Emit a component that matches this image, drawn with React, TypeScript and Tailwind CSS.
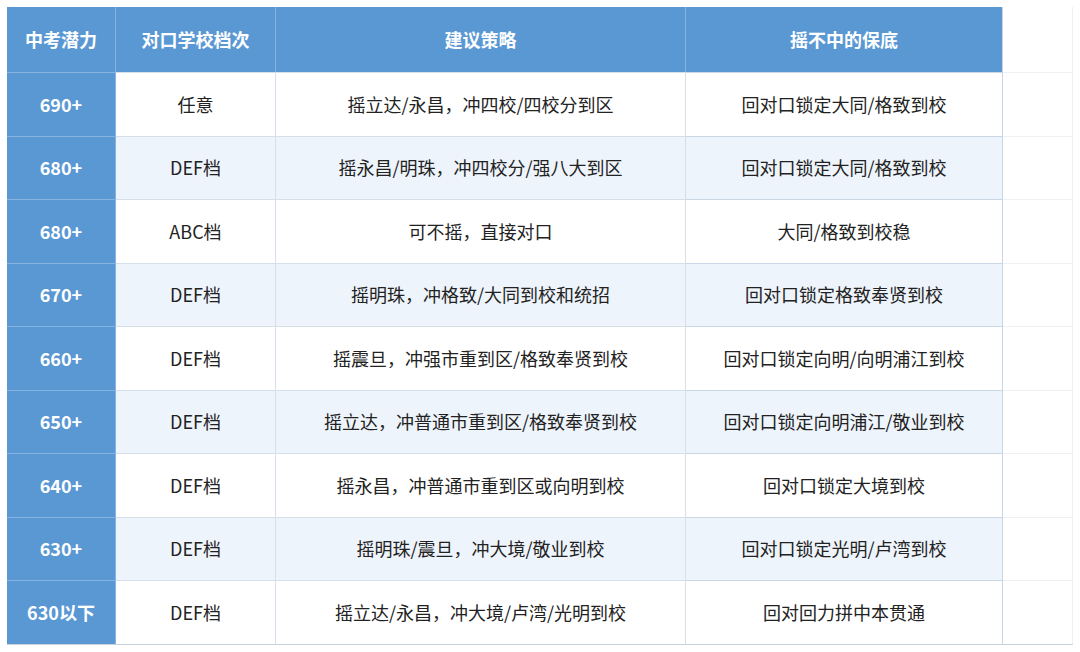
const rows = [
  { score: '690+', tier: '任意', plan: '摇立达/永昌，冲四校/四校分到区', safe: '回对口锁定大同/格致到校' },
  { score: '680+', tier: 'DEF档', plan: '摇永昌/明珠，冲四校分/强八大到区', safe: '回对口锁定大同/格致到校' },
  { score: '680+', tier: 'ABC档', plan: '可不摇，直接对口', safe: '大同/格致到校稳' },
  { score: '670+', tier: 'DEF档', plan: '摇明珠，冲格致/大同到校和统招', safe: '回对口锁定格致奉贤到校' },
  { score: '660+', tier: 'DEF档', plan: '摇震旦，冲强市重到区/格致奉贤到校', safe: '回对口锁定向明/向明浦江到校' },
  { score: '650+', tier: 'DEF档', plan: '摇立达，冲普通市重到区/格致奉贤到校', safe: '回对口锁定向明浦江/敬业到校' },
  { score: '640+', tier: 'DEF档', plan: '摇永昌，冲普通市重到区或向明到校', safe: '回对口锁定大境到校' },
  { score: '630+', tier: 'DEF档', plan: '摇明珠/震旦，冲大境/敬业到校', safe: '回对口锁定光明/卢湾到校' },
  { score: '630以下', tier: 'DEF档', plan: '摇立达/永昌，冲大境/卢湾/光明到校', safe: '回对回力拼中本贯通' },
]

const font = { fontFamily: '"Noto Sans CJK SC", "Noto Sans", sans-serif' }

export default function App() {
  return (
    <div className="h-[652px] w-[1080px] bg-white pl-[7px] pt-[7px]" style={font}>
      <div className="grid w-[1066px] grid-cols-[109px_160px_410px_317px_70px] border-b border-[#c8d2dc]">
        <div className="flex h-[65px] items-center justify-center border-r border-[#86b4e2] bg-[#5a98d4] text-[18px] font-bold text-white">
          中考潜力
        </div>
        <div className="flex h-[65px] items-center justify-center border-r border-[#86b4e2] bg-[#5a98d4] text-[18px] font-bold text-white">
          对口学校档次
        </div>
        <div className="flex h-[65px] items-center justify-center border-r border-[#86b4e2] bg-[#5a98d4] text-[18px] font-bold text-white">
          建议策略
        </div>
        <div className="flex h-[65px] items-center justify-center border-r border-[#c9d6e3] bg-[#5a98d4] text-[18px] font-bold text-white">
          摇不中的保底
        </div>
        <div className="h-[65px] border-r border-[#eef1f4] bg-white" />

        {rows.map((r, i) => {
          const bg = i % 2 === 1 ? 'bg-[#eef4fb]' : 'bg-white'
          return (
            <div key={i} className="contents">
              <div className="flex h-[63.5px] items-center justify-center border-r border-t border-[#86b4e2] bg-[#5a98d4] text-[18px] font-bold text-white">
                {r.score}
              </div>
              <div className={`flex h-[63.5px] items-center justify-center border-r border-t border-[#d6e0ea] ${bg} text-[18px] text-[#222]`}>
                {r.tier}
              </div>
              <div className={`flex h-[63.5px] items-center justify-center border-r border-t border-[#d6e0ea] ${bg} text-[18px] text-[#222]`}>
                {r.plan}
              </div>
              <div className={`flex h-[63.5px] items-center justify-center border-r border-t border-[#c9d6e3] ${bg} text-[18px] text-[#222]`}>
                {r.safe}
              </div>
              <div className="h-[63.5px] border-r border-t border-[#eef1f4] bg-white" />
            </div>
          )
        })}
      </div>
    </div>
  )
}
